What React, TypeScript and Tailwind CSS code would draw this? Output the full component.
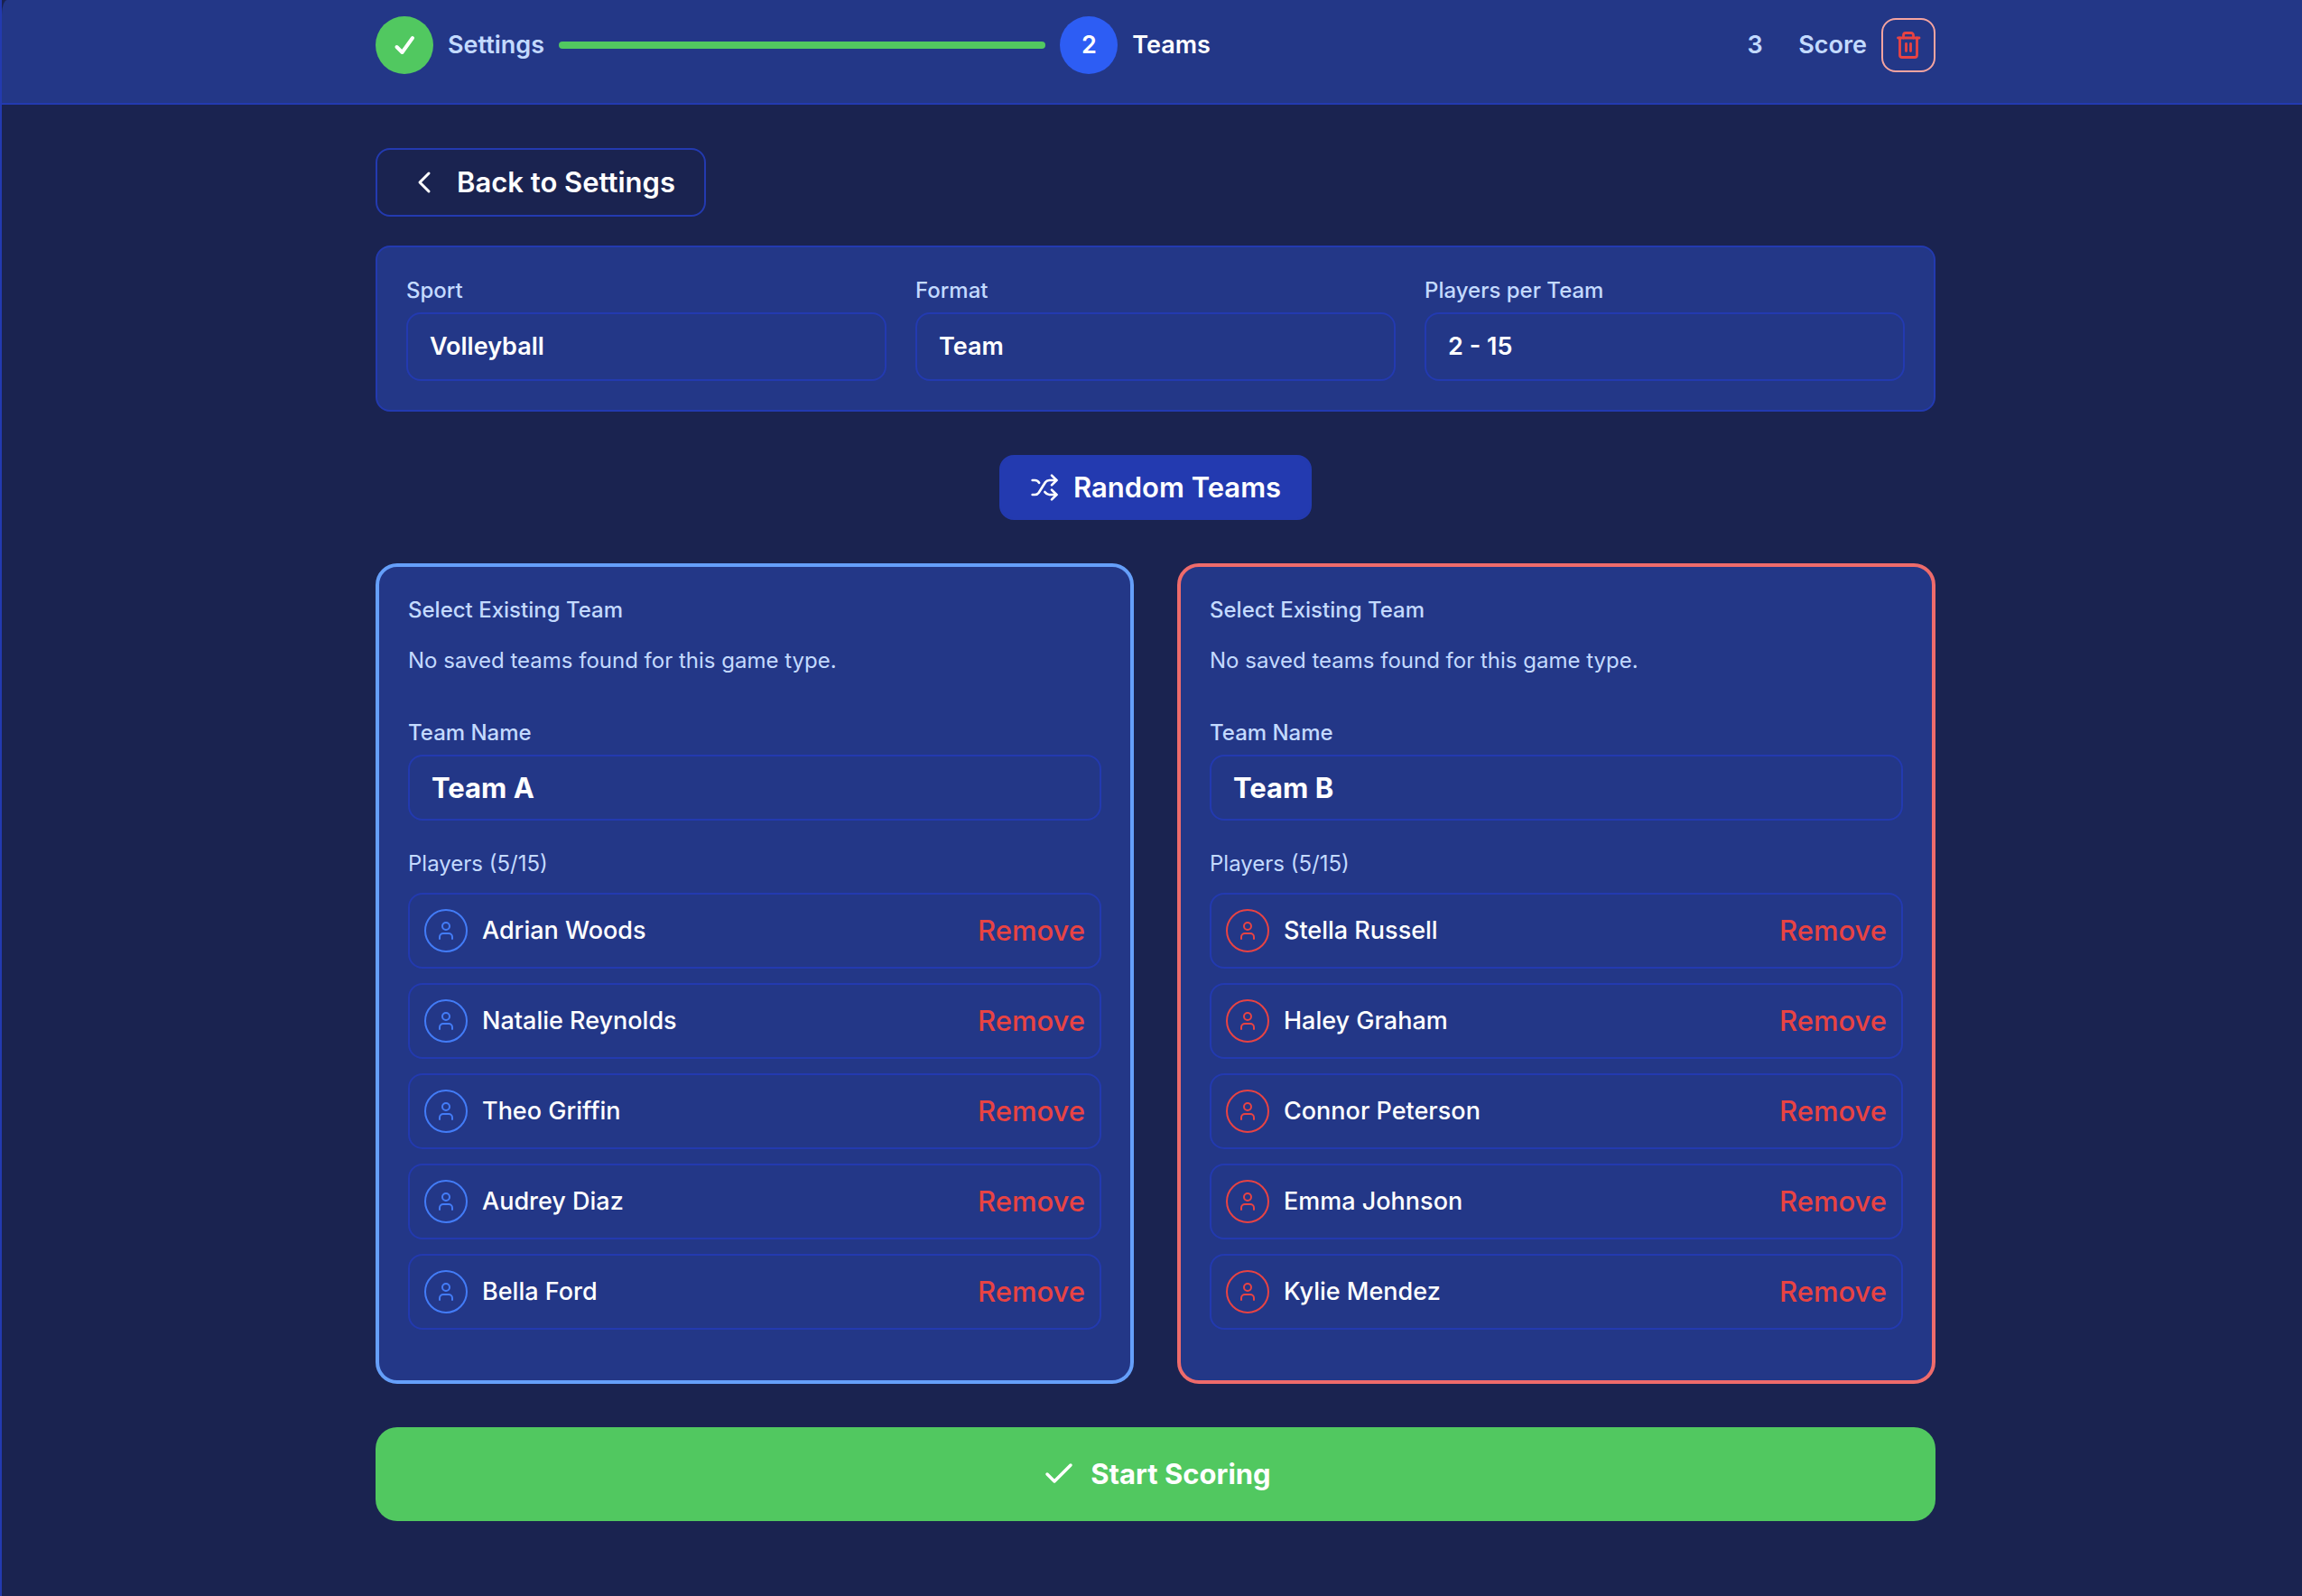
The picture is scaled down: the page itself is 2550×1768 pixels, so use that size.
import { Shuffle, User } from "lucide-react";

type Tone = "blue" | "red";

const summary = [
  { label: "Sport", value: "Volleyball" },
  { label: "Format", value: "Team" },
  { label: "Players per Team", value: "2 - 15" },
];

const teams: { id: string; name: string; tone: Tone; players: string[] }[] = [
  {
    id: "team-a",
    name: "Team A",
    tone: "blue",
    players: ["Adrian Woods", "Natalie Reynolds", "Theo Griffin", "Audrey Diaz", "Bella Ford"],
  },
  {
    id: "team-b",
    name: "Team B",
    tone: "red",
    players: ["Stella Russell", "Haley Graham", "Connor Peterson", "Emma Johnson", "Kylie Mendez"],
  },
];

const cardBorder = { blue: "border-[#659ffa]", red: "border-[#ee6b6b]" };
const avatarColor = { blue: "border-[#437cf7] text-[#437cf7]", red: "border-[#e84343] text-[#e84343]" };

function TrashIcon() {
  return (
    <svg viewBox="0 0 32 32" className="size-8" fill="none" stroke="currentColor" strokeWidth="2.8" strokeLinecap="round" strokeLinejoin="round" aria-hidden="true">
      <path d="M4.500 8h23.500" />
      <path d="M6.500 8v19a2.500 2.500 0 0 0 2.500 2.500h14a2.500 2.500 0 0 0 2.500-2.500V8" />
      <path d="M10.500 8V5a2.500 2.500 0 0 1 2.500-2.500h6a2.500 2.500 0 0 1 2.500 2.500v3" />
      <path d="M13.500 14.500v8M18.500 14.500v8" />
    </svg>
  );
}

function Stepper() {
  return (
    <header className="rounded-tl-[6px_16px] border-b-2 border-[#233ab0] bg-[#233787] pt-[18px] pb-8 pl-2">
      <div className="mx-auto flex max-w-[1728px] items-center gap-4 text-[27px] leading-10 font-semibold text-[#c3daff]">
        <span className="flex size-16 shrink-0 items-center justify-center rounded-full bg-[#51c860] text-white">
          <svg viewBox="0 0 24 24" className="size-6" fill="none" stroke="currentColor" strokeWidth="4" strokeLinecap="round" strokeLinejoin="round" aria-hidden="true">
            <path d="M3.500 14l6 6L21 4" />
          </svg>
        </span>
        <span>Settings</span>
        <span className="h-2 flex-1 rounded-full bg-[#51c860]" />
        <span className="flex size-16 shrink-0 items-center justify-center rounded-full bg-[#2d5df4] text-white">2</span>
        <span className="text-white">Teams</span>
        <span className="h-2 flex-1" />
        <span className="flex size-16 shrink-0 items-center justify-center">3</span>
        <span>Score</span>
        <button aria-label="Delete match" className="flex size-[60px] shrink-0 items-center justify-center rounded-2xl border-2 border-[#f5a4a0] text-[#e84343]">
          <TrashIcon />
        </button>
      </div>
    </header>
  );
}

function TeamCard({ team }: { team: (typeof teams)[number] }) {
  return (
    <section className={`rounded-3xl border-4 bg-[#233787] p-8 text-2xl ${cardBorder[team.tone]}`}>
      <h2 className="font-medium">Select Existing Team</h2>
      <p className="mt-6">No saved teams found for this game type.</p>

      <label htmlFor={team.id} className="mt-12 block font-medium">Team Name</label>
      <input
        id={team.id}
        defaultValue={team.name}
        className="mt-2 block h-[73px] w-full rounded-2xl border-2 border-[#233ab0] bg-transparent px-6 text-[31px] font-bold text-white"
      />

      <h3 className="mt-8">Players (5/15)</h3>
      <ul className="mt-4 mb-6 flex flex-col gap-4">
        {team.players.map((player) => (
          <li key={player} className="flex items-center gap-4 rounded-2xl border-2 border-[#233ab0] p-4">
            <span className={`flex size-12 items-center justify-center rounded-full border-2 ${avatarColor[team.tone]}`}>
              <User size={24} />
            </span>
            <span className="flex-1 text-[27px] leading-10 font-medium text-white">{player}</span>
            <button className="text-[31px] leading-10 font-medium text-[#e84343]">Remove</button>
          </li>
        ))}
      </ul>
    </section>
  );
}

export default function App() {
  return (
    <div className="min-h-screen border-l-2 border-[#233ab0] bg-[#1a2350] font-[Inter,sans-serif] text-[#c3daff]">
      <Stepper />
      <main className="pt-12 pb-20 pl-2">
        <div className="mx-auto max-w-[1728px]">
          <button className="flex h-[76px] items-center gap-4 rounded-2xl border-2 border-[#233ab0] px-8 text-[31px] font-semibold text-white">
            <svg viewBox="0 0 40 40" className="size-10" fill="none" stroke="currentColor" strokeWidth="3" strokeLinecap="round" strokeLinejoin="round" aria-hidden="true">
              <path d="M25 10L15 20l10 10" />
            </svg>
            Back to Settings
          </button>

          <dl className="mt-8 grid grid-cols-3 gap-8 rounded-2xl border-2 border-[#233ab0] bg-[#233787] p-8">
            {summary.map((item) => (
              <div key={item.label}>
                <dt className="text-2xl font-medium">{item.label}</dt>
                <dd className="mt-2 rounded-2xl border-2 border-[#233ab0] px-6 py-4 text-[27px] leading-10 font-semibold text-white">{item.value}</dd>
              </div>
            ))}
          </dl>

          <button className="mx-auto mt-12 flex h-18 items-center gap-4 rounded-2xl border-2 border-[#233ab0] bg-[#233ab0] px-8 text-[31px] font-semibold text-white">
            <Shuffle size={32} />
            Random Teams
          </button>

          <div className="mt-12 grid grid-cols-2 gap-12">
            {teams.map((team) => (
              <TeamCard key={team.id} team={team} />
            ))}
          </div>

          <button className="mt-12 flex h-26 w-full items-center justify-center gap-4 rounded-3xl bg-[#51c860] text-[31px] font-bold text-white">
            <svg viewBox="0 0 40 40" className="size-10" fill="none" stroke="currentColor" strokeWidth="3.5" strokeLinecap="round" strokeLinejoin="round" aria-hidden="true">
              <path d="M8 20l8 8L34 10" />
            </svg>
            Start Scoring
          </button>
        </div>
      </main>
    </div>
  );
}
